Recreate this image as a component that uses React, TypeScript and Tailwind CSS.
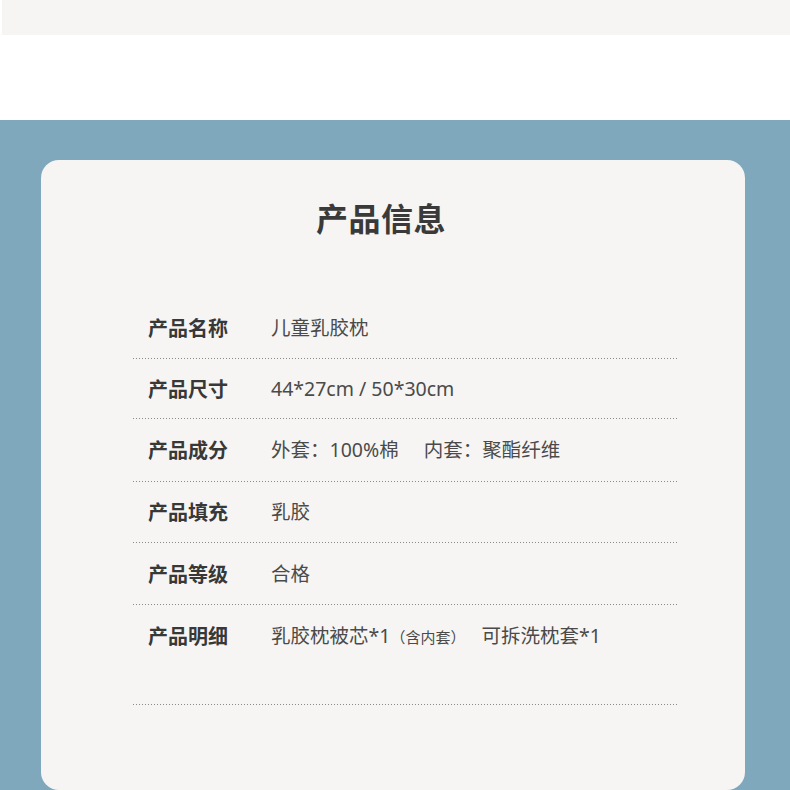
import React from "react";

const font = { fontFamily: '"Noto Sans CJK SC", "Noto Sans", sans-serif' };
const valueFont = { fontFamily: '"Noto Sans", "Noto Sans CJK SC", sans-serif' };

function Dots() {
  return (
    <div className="h-px w-full bg-[linear-gradient(to_right,#8a8a8a_1px,transparent_1px)] bg-[length:3px_1px] bg-repeat-x" />
  );
}

function Row({ h, label, children }: { h: string; label: string; children: React.ReactNode }) {
  return (
    <>
      <div className={`flex items-center ${h}`}>
        <div className="w-[138px] pl-[15px] text-[20px] font-bold text-[#383838] leading-none">{label}</div>
        <div className="text-[19.5px] text-[#4a4a4a] leading-none whitespace-pre" style={valueFont}>
          {children}
        </div>
      </div>
      <Dots />
    </>
  );
}

export default function App() {
  return (
    <div className="w-[790px] h-[790px] overflow-hidden bg-white" style={font}>
      <div className="h-[35px] ml-[2px] bg-[#f6f5f3]" />
      <div className="h-[85px]" />
      <div className="h-[670px] bg-[#80a8bd] pt-[40px] pl-[41px] pr-[45px]">
        <div className="h-[630px] rounded-[18px] bg-[#f6f5f3] pt-[37px]">
          <div className="pr-[24px] text-center text-[32px] font-bold leading-[40px] text-[#3a3a3a] tracking-[0.5px]">
            产品信息
          </div>
          <div className="ml-[92px] w-[544px] mt-[60px]">
            <Row h="h-[61px]" label="产品名称">儿童乳胶枕</Row>
            <Row h="h-[59px]" label="产品尺寸">44*27cm / 50*30cm</Row>
            <Row h="h-[62px]" label="产品成分">
              外套：100%棉<span className="inline-block w-[25px]" />内套：聚酯纤维
            </Row>
            <Row h="h-[60px]" label="产品填充">乳胶</Row>
            <Row h="h-[61px]" label="产品等级">合格</Row>
            <div className="flex items-start h-[99px] pt-[21px]">
              <div className="w-[138px] pl-[15px] text-[20px] font-bold text-[#383838] leading-[20px]">产品明细</div>
              <div
                className="text-[19.5px] text-[#4a4a4a] leading-[20px] whitespace-pre flex items-baseline"
                style={valueFont}
              >
                <span>乳胶枕被芯*1</span>
                <span className="text-[15px]">（含内套）</span>
                <span className="ml-[16px]">可拆洗枕套*1</span>
              </div>
            </div>
            <Dots />
          </div>
        </div>
      </div>
    </div>
  );
}
